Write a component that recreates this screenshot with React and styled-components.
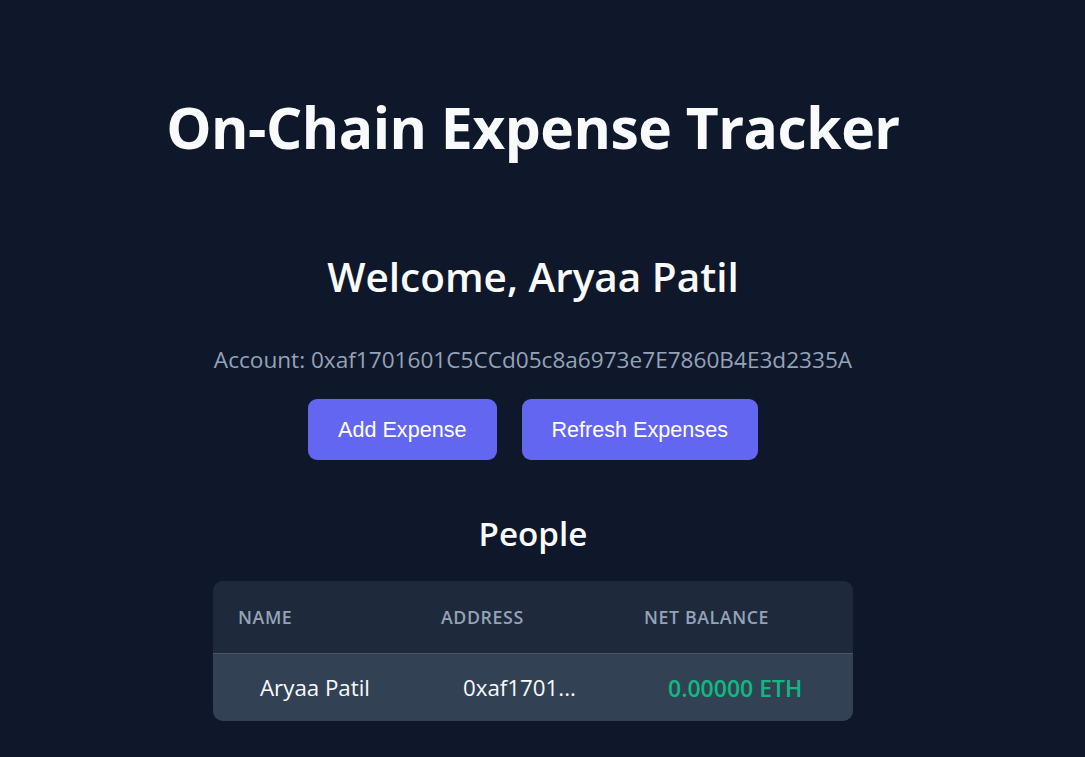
import React from "react";
import styled, { createGlobalStyle } from "styled-components";

const Global = createGlobalStyle`
  html, body { margin: 0; padding: 0; background: #0f172a; }
  body { font-family: "Open Sans", "Noto Sans", sans-serif; color: #f8fafc; }
`;

const Page = styled.main`
  min-height: 757px;
  display: flex;
  flex-direction: column;
  align-items: center;
  padding: 99px 19px 0 0;
  box-sizing: border-box;
`;

const Title = styled.h1`
  margin: 0;
  font-size: 57px;
  font-weight: 700;
  line-height: 57px;
  letter-spacing: -0.5px;
  color: #f8fafc;
`;

const Welcome = styled.h2`
  margin: 100px 0 0;
  font-size: 40.5px;
  font-weight: 600;
  line-height: 41px;
`;

const Account = styled.p`
  margin: 51px 0 0;
  font-size: 22.6px;
  line-height: 23px;
  color: #94a3b8;
`;

const Actions = styled.div`
  display: flex;
  gap: 25px;
  margin-top: 28px;
`;

const Button = styled.button`
  height: 61px;
  padding: 0 30px;
  border: none;
  border-radius: 9px;
  background: #6366f1;
  color: #ffffff;
  font-family: "Liberation Sans", Arial, sans-serif;
  font-size: 21.6px;
  cursor: pointer;
`;

const Section = styled.h2`
  margin: 57px 0 0;
  font-size: 33.2px;
  font-weight: 600;
  line-height: 33px;
`;

const Table = styled.div`
  margin-top: 31px;
  width: 640px;
  border-radius: 10px;
  overflow: hidden;
  background: #1e293b;
`;

const Row = styled.div`
  display: grid;
  grid-template-columns: ${(p) => (p.$head ? "203px 203px 1fr" : "203px 205px 1fr")};
  align-items: center;
  height: ${(p) => (p.$head ? "72px" : "68px")};
  padding-left: ${(p) => (p.$head ? "25px" : "47px")};
  background: ${(p) => (p.$head ? "#1e293b" : "#334155")};
  border-top: ${(p) => (p.$head ? "none" : "1px solid #475569")};
  box-sizing: border-box;
`;

const Th = styled.div`
  font-size: 17.8px;
  font-weight: 600;
  letter-spacing: 0.6px;
  text-transform: uppercase;
  color: #94a3b8;
`;

const Td = styled.div`
  font-size: ${(p) => (p.$green ? "23px" : "22.3px")};
  color: ${(p) => (p.$green ? "#10b981" : "#f8fafc")};
  font-weight: ${(p) => (p.$green ? 600 : 400)};
`;

export default function App() {
  return (
    <>
      <Global />
      <Page>
        <Title>On-Chain Expense Tracker</Title>
        <Welcome>Welcome, Aryaa Patil</Welcome>
        <Account>Account: 0xaf1701601C5CCd05c8a6973e7E7860B4E3d2335A</Account>
        <Actions>
          <Button>Add Expense</Button>
          <Button>Refresh Expenses</Button>
        </Actions>
        <Section>People</Section>
        <Table>
          <Row $head>
            <Th>Name</Th>
            <Th>Address</Th>
            <Th>Net Balance</Th>
          </Row>
          <Row>
            <Td>Aryaa Patil</Td>
            <Td>0xaf1701...</Td>
            <Td $green>0.00000 ETH</Td>
          </Row>
        </Table>
      </Page>
    </>
  );
}
